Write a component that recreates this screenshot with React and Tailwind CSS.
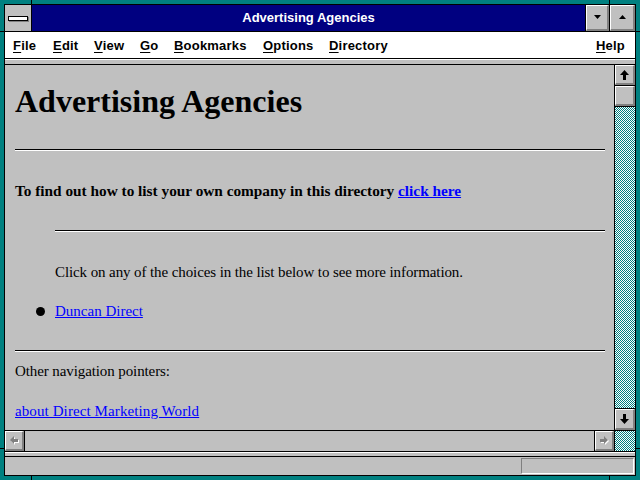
import React from "react";

const Raised = ({ className = "", children }) => (
  <div
    className={`flex items-center justify-center bg-[#c0c0c0] border-t border-l border-white border-b-2 border-r-2 border-b-[#808080] border-r-[#808080] ${className}`}
  >
    {children}
  </div>
);

const Hr = ({ className = "" }) => (
  <div className={`h-0 border-t border-t-black border-b border-b-white ${className}`} />
);

const Dither = ({ className = "" }) => (
  <div className={`overflow-hidden ${className}`}>
    <svg width="100%" height="100%" shapeRendering="crispEdges">
      <defs>
        <pattern id="dith" width="2" height="2" patternUnits="userSpaceOnUse">
          <rect x="0" y="0" width="2" height="2" fill="#ffffff" />
          <rect x="0" y="0" width="1" height="1" fill="#008080" />
          <rect x="1" y="1" width="1" height="1" fill="#008080" />
        </pattern>
      </defs>
      <rect width="100%" height="100%" fill="url(#dith)" />
    </svg>
  </div>
);

const MenuItem = ({ first, rest, className = "" }) => (
  <span className={`shrink-0 ${className}`}>
    <span className="underline underline-offset-2">{first}</span>
    {rest}
  </span>
);

export default function App() {
  return (
    <div className="relative w-[640px] h-[480px] bg-[#008080] overflow-hidden">
      {/* frame notches */}
      <div className="absolute left-[31px] top-0 w-px h-[4px] bg-black" />
      <div className="absolute left-[609px] top-0 w-px h-[4px] bg-black" />
      <div className="absolute left-[31px] bottom-0 w-px h-[4px] bg-black" />
      <div className="absolute left-[609px] bottom-0 w-px h-[4px] bg-black" />
      <div className="absolute left-0 top-[31px] w-[4px] h-px bg-black" />
      <div className="absolute right-0 top-[31px] w-[4px] h-px bg-black" />
      <div className="absolute left-0 top-[448px] w-[4px] h-px bg-black" />
      <div className="absolute right-0 top-[448px] w-[4px] h-px bg-black" />

      <div className="absolute left-[4px] top-[4px] w-[632px] h-[472px] border border-black flex flex-col bg-[#c0c0c0]">
        {/* title bar */}
        <div className="h-[27px] shrink-0 flex border-b border-black">
          <div className="w-[27px] bg-[#c0c0c0] flex items-center justify-center border-r border-black">
            <div className="w-[20px] h-[5px] bg-white border border-black shadow-[1px_1px_0_#808080]" />
          </div>
          <div className="flex-1 bg-[#000080] flex items-center justify-center text-white font-bold text-[13px] font-['Liberation_Sans',Arial,sans-serif] border-r border-black">
            Advertising Agencies
          </div>
          <Raised className="w-[23px] h-full">
            <svg width="7" height="4" viewBox="0 0 7 4" className="mt-[-2px]">
              <polygon points="0,0 7,0 3.5,4" fill="black" />
            </svg>
          </Raised>
          <div className="w-px bg-black" />
          <Raised className="w-[25px] h-full">
            <svg width="7" height="4" viewBox="0 0 7 4" className="mt-[-2px]">
              <polygon points="0,4 7,4 3.5,0" fill="black" />
            </svg>
          </Raised>
        </div>

        {/* menu bar */}
        <div className="h-[27px] shrink-0 bg-white flex items-center border-b border-black font-bold text-[13px] tracking-[0.2px] font-['Liberation_Sans',Arial,sans-serif] text-black pt-[1px]">
          <MenuItem first="F" rest="ile" className="ml-[8px] w-[40px]" />
          <MenuItem first="E" rest="dit" className="w-[41px]" />
          <MenuItem first="V" rest="iew" className="w-[46px]" />
          <MenuItem first="G" rest="o" className="w-[34px]" />
          <MenuItem first="B" rest="ookmarks" className="w-[89px]" />
          <MenuItem first="O" rest="ptions" className="w-[66px]" />
          <MenuItem first="D" rest="irectory" />
          <MenuItem first="H" rest="elp" className="ml-auto mr-[10px]" />
        </div>

        {/* band */}
        <div className="h-[6px] shrink-0 bg-[#c0c0c0] border-t border-t-white border-b border-b-black" />

        {/* main area */}
        <div className="h-[365px] shrink-0 flex">
          <div className="w-[609px] bg-[#c0c0c0] overflow-hidden font-['Liberation_Serif','Times_New_Roman',serif] text-black pl-[10px] pr-[9px]">
            <h1 className="mt-[18px] text-[32px] leading-[36px] font-bold">Advertising Agencies</h1>
            <Hr className="mt-[30px]" />
            <p className="mt-[30px] text-[15.3px] leading-[20px] font-bold">
              To find out how to list your own company in this directory{" "}
              <a className="text-[#0000ff] underline">click here</a>
            </p>
            <div className="pl-[40px]">
              <Hr className="mt-[29px]" />
              <p className="mt-[30px] text-[15px] leading-[20px] tracking-[-0.1px]">
                Click on any of the choices in the list below to see more information.
              </p>
            </div>
            <ul className="mt-[19px] pl-[21px] text-[15px] leading-[20px]">
              <li className="flex items-center">
                <span className="w-[9px] h-[9px] rounded-full bg-black mr-[10px]" />
                <a className="text-[#0000ff] underline">Duncan Direct</a>
              </li>
            </ul>
            <Hr className="mt-[29px]" />
            <p className="mt-[9px] text-[15px] leading-[20px] tracking-[-0.1px]">Other navigation pointers:</p>
            <p className="mt-[20px] text-[15px] leading-[20px] tracking-[0.1px]">
              <a className="text-[#0000ff] underline">about Direct Marketing World</a>
            </p>
          </div>
          {/* vertical scrollbar */}
          <div className="w-[21px] border-l border-black flex flex-col">
            <Raised className="h-[20px] shrink-0">
              <svg width="9" height="10" viewBox="0 0 9 10">
                <polygon points="0,5 4.5,0 9,5" fill="black" />
                <rect x="3" y="5" width="3" height="5" fill="black" />
              </svg>
            </Raised>
            <div className="h-px shrink-0 bg-black" />
            <Raised className="h-[20px] shrink-0" />
            <div className="h-px shrink-0 bg-black" />
            <Dither className="flex-1" />
            <div className="h-px shrink-0 bg-black" />
            <Raised className="h-[21px] shrink-0">
              <svg width="9" height="10" viewBox="0 0 9 10">
                <polygon points="0,5 4.5,10 9,5" fill="black" />
                <rect x="3" y="0" width="3" height="5" fill="black" />
              </svg>
            </Raised>
          </div>
        </div>

        {/* horizontal scrollbar */}
        <div className="h-[21px] shrink-0 flex border-t border-black">
          <div className="w-[609px] flex">
            <Raised className="w-[19px]">
              <svg width="9" height="9" viewBox="0 0 9 9">
                <polygon points="1,5 5,1 5,9" fill="white" />
                <rect x="5" y="4" width="4" height="3" fill="white" />
                <polygon points="0,4 4,0 4,8" fill="#808080" />
                <rect x="4" y="3" width="4" height="3" fill="#808080" />
              </svg>
            </Raised>
            <div className="w-px bg-black" />
            <div className="flex-1 bg-[#c0c0c0]" />
            <div className="w-px bg-black" />
            <Raised className="w-[19px]">
              <svg width="9" height="9" viewBox="0 0 9 9">
                <polygon points="5,1 9,5 5,9" fill="white" />
                <rect x="1" y="4" width="4" height="3" fill="white" />
                <polygon points="4,0 8,4 4,8" fill="#808080" />
                <rect x="0" y="3" width="4" height="3" fill="#808080" />
              </svg>
            </Raised>
          </div>
          <div className="w-px bg-black" />
          <Dither className="flex-1" />
        </div>

        {/* stripe */}
        <div className="h-[6px] shrink-0 bg-[#c0c0c0] border-t border-t-black border-b border-b-black">
          <div className="h-px bg-white" />
        </div>

        {/* status bar */}
        <div className="flex-1 bg-[#c0c0c0] flex items-center justify-end pr-[1px]">
          <div className="w-[113px] h-[16px] border-t border-l border-[#808080] border-b border-r border-b-white border-r-white" />
        </div>
      </div>
    </div>
  );
}
